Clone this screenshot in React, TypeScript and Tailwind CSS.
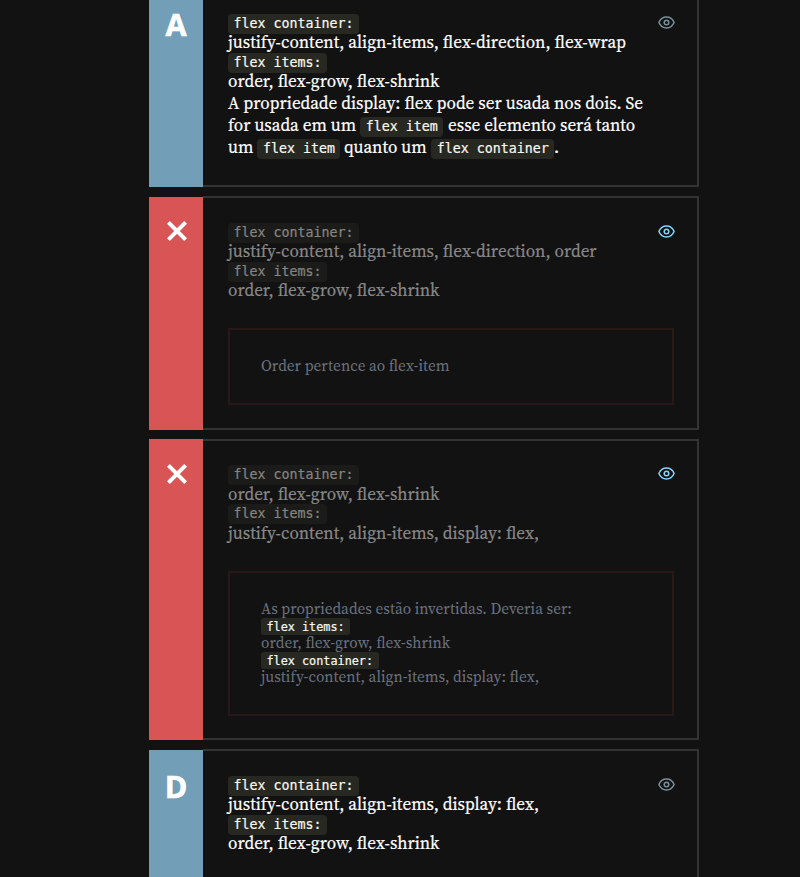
import React from "react";

const serif =
  "font-['Source_Serif_4','Source_Serif_Pro','Noto_Serif_CJK_SC','Liberation_Serif',serif]";

function Chip({ children, dim = false }: { children: React.ReactNode; dim?: boolean }) {
  return (
    <div className="flex h-[17px] items-start">
      <code
        className={`h-5 shrink-0 rounded-[4px] px-[5.5px] font-['DejaVu_Sans_Mono',monospace] text-[13.3px] leading-[19px] whitespace-pre ${
          dim ? "bg-[#1b1c19] text-[#858583]" : "bg-[#272822] text-[#f8f8f2]"
        }`}
      >
        {children}
      </code>
    </div>
  );
}

function InlineChip({ children, className = "mr-[5px]" }: { children: React.ReactNode; className?: string }) {
  return (
    <code
      className={`relative top-[2px] ml-[4px] h-5 shrink-0 rounded-[4px] bg-[#272822] px-[5.5px] font-['DejaVu_Sans_Mono',monospace] text-[13.3px] leading-[19px] text-[#f8f8f2] ${className}`}
    >
      {children}
    </code>
  );
}

function SmallChip({ children }: { children: React.ReactNode }) {
  return (
    <div className="flex h-[15px] items-start">
      <code className="h-[17px] shrink-0 rounded-[3px] bg-[#272822] px-[5.5px] font-['DejaVu_Sans_Mono',monospace] text-[11.8px] leading-[18px] whitespace-pre text-[#f8f8f2] [-webkit-text-stroke:0.2px]">
        {children}
      </code>
    </div>
  );
}

function Narrow({ children, className = "" }: { children: React.ReactNode; className?: string }) {
  return (
    <span className={`mt-[0.5px] inline-block shrink-0 origin-left scale-x-[0.95] leading-[22px] ${className}`}>
      {children}
    </span>
  );
}

function Row({ children }: { children: React.ReactNode }) {
  return <div className="flex h-[22px] items-center whitespace-pre">{children}</div>;
}

function Line({ children }: { children: React.ReactNode }) {
  return (
    <Row>
      <Narrow>{children}</Narrow>
    </Row>
  );
}

function NoteLine({ children }: { children: React.ReactNode }) {
  return (
    <div className="h-[19px] origin-left scale-x-[0.956] leading-[19px] whitespace-pre">{children}</div>
  );
}

function Eye({ className }: { className: string }) {
  return (
    <svg
      viewBox="0 0 17 13"
      className={`mt-[2px] h-[13px] w-[17px] shrink-0 ${className}`}
      fill="none"
      stroke="currentColor"
      strokeWidth="1.5"
    >
      <path d="M.9 6.5C2.4 3 5.1 1.1 8.5 1.1S14.6 3 16.1 6.5C14.6 10 11.9 11.9 8.5 11.9S2.4 10 .9 6.5Z" />
      <circle cx="8.5" cy="6.5" r="2.3" />
    </svg>
  );
}

function Cross() {
  return (
    <svg viewBox="0 0 20 20" className="ml-[1px] h-5 w-5" stroke="#fff" strokeWidth="4">
      <path d="M1.4 1.4 18.6 18.6M18.6 1.4 1.4 18.6" />
    </svg>
  );
}

type CardProps = {
  height: string;
  marker: React.ReactNode;
  strip: string;
  pad: string;
  eye: string;
  children: React.ReactNode;
};

function Card({ height, marker, strip, pad, eye, children }: CardProps) {
  return (
    <section className={`flex w-[550px] shrink-0 ${height}`}>
      <div className={`flex w-[54px] shrink-0 justify-center ${strip}`}>{marker}</div>
      <div className={`flex min-w-0 flex-1 border-y-2 border-r-2 border-[#333] pr-[23px] pl-[25px] ${pad}`}>
        <div className="w-[430px] shrink-0">{children}</div>
        <Eye className={eye} />
      </div>
    </section>
  );
}

function Letter({ children }: { children: string }) {
  return (
    <span className="font-['Open_Sans','Noto_Sans',sans-serif] text-[30.5px] leading-[30px] font-bold text-white [-webkit-text-stroke:0.6px]">
      {children}
    </span>
  );
}

const bright = `${serif} text-[18px] text-white [-webkit-text-stroke:0.2px]`;
const faded = `${serif} text-[18px] text-[#888] [-webkit-text-stroke:0.2px]`;
const note = `${serif} text-[16px] text-[#6b7280]`;

export default function App() {
  return (
    <main className="flex h-[877px] w-[800px] flex-col overflow-hidden bg-[#121212] pl-[149px]">
      <Card height="h-[187px]" strip="bg-[#729fb7] pt-[9px]" pad="border-t-0 pt-[14px]" eye="text-[#78909c]" marker={<Letter>A</Letter>}>
        <div className={bright}>
          <Chip>flex container:</Chip>
          <Line>justify-content, align-items, flex-direction, flex-wrap</Line>
          <Chip>flex items:</Chip>
          <Line>order, flex-grow, flex-shrink</Line>
          <Line>A propriedade display: flex pode ser usada nos dois. Se</Line>
          <Row>
            <Narrow className="-mr-[6.7px]">for usada em um</Narrow>
            <InlineChip>flex item</InlineChip>
            <Narrow>esse elemento será tanto</Narrow>
          </Row>
          <Row>
            <Narrow className="-mr-[1.3px]">um</Narrow>
            <InlineChip className="mr-[4px]">flex item</InlineChip>
            <Narrow className="-mr-[4.4px]">quanto um</Narrow>
            <InlineChip className="mr-0">flex container</InlineChip>
            <Narrow>.</Narrow>
          </Row>
        </div>
      </Card>

      <Card height="mt-[9px] h-[234px]" strip="mt-[1px] bg-[#d95555] pt-6" pad="pt-[25px]" eye="text-[#81d4fa]" marker={<Cross />}>
        <div className={faded}>
          <Chip dim>flex container:</Chip>
          <Line>justify-content, align-items, flex-direction, order</Line>
          <Chip dim>flex items:</Chip>
          <Line>order, flex-grow, flex-shrink</Line>
        </div>
        <div className={`mt-[27px] h-[77px] w-[446px] border-2 border-[#291818] pt-[26px] pl-[31px] ${note}`}>
          <NoteLine>Order pertence ao flex-item</NoteLine>
        </div>
      </Card>

      <Card height="mt-[9px] h-[301px]" strip="bg-[#d95555] pt-[25px]" pad="pt-6" eye="text-[#81d4fa]" marker={<Cross />}>
        <div className={faded}>
          <Chip dim>flex container:</Chip>
          <div className="-mb-[1px] pt-[1px]"><Line>order, flex-grow, flex-shrink</Line></div>
          <Chip dim>flex items:</Chip>
          <div className="-mb-[1px] pt-[1px]"><Line>justify-content, align-items, display: flex,</Line></div>
        </div>
        <div className={`mt-7 h-[145px] w-[446px] border-2 border-[#291818] pt-[26px] pl-[31px] ${note}`}>
          <NoteLine>As propriedades estão invertidas. Deveria ser:</NoteLine>
          <SmallChip>flex items:</SmallChip>
          <NoteLine>order, flex-grow, flex-shrink</NoteLine>
          <SmallChip>flex container:</SmallChip>
          <NoteLine>justify-content, align-items, display: flex,</NoteLine>
        </div>
      </Card>

      <Card height="mt-[9px] h-[200px]" strip="mt-[1px] bg-[#729fb7] pt-[21px]" pad="pt-[25px]" eye="text-[#78909c]" marker={<Letter>D</Letter>}>
        <div className={bright}>
          <Chip>flex container:</Chip>
          <Line>justify-content, align-items, display: flex,</Line>
          <Chip>flex items:</Chip>
          <Line>order, flex-grow, flex-shrink</Line>
        </div>
      </Card>
    </main>
  );
}
